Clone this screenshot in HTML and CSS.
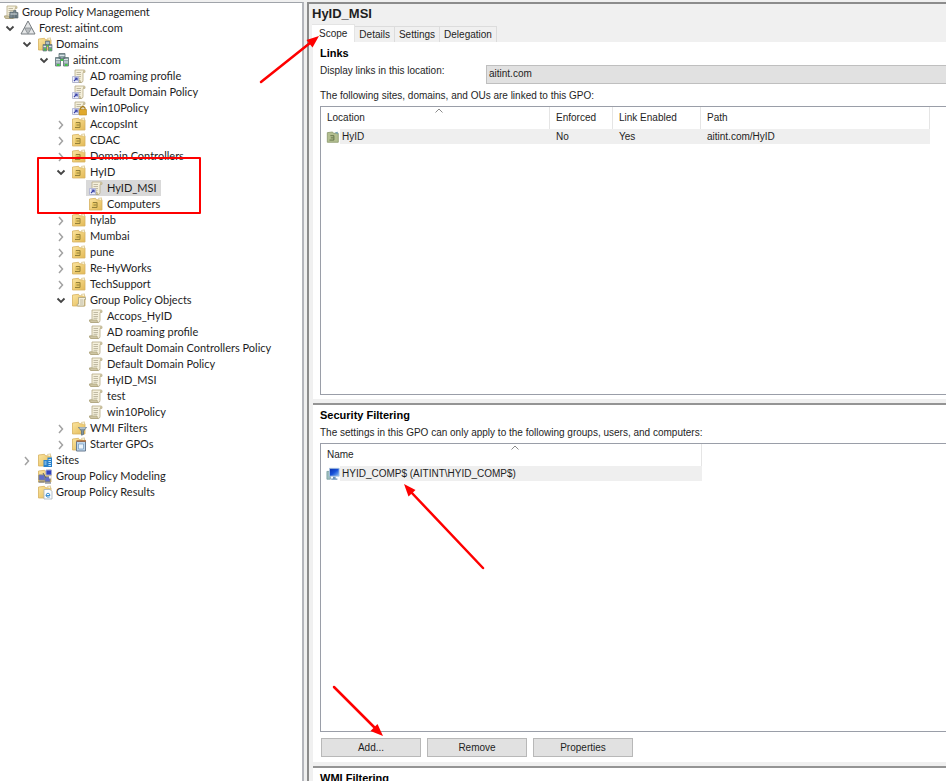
FILE: index.html
```
<!DOCTYPE html>
<html lang="en">
<head>
  <meta charset="UTF-8" />
  <title>Group Policy Management</title>
  <meta name="viewport" content="width=device-width, initial-scale=1.0" />
  <link rel="stylesheet" href="styles.css">
</head>
<body>

  <!-- Icon set -->
  <svg class="sprite" width="0" height="0" aria-hidden="true">
    <defs>
      <linearGradient id="gold" x1="0" y1="0" x2="1" y2="1">
        <stop offset="0" stop-color="#fbe5a0" />
        <stop offset="1" stop-color="#e3b955" />
      </linearGradient>
      <linearGradient id="screen" x1="0" y1="0" x2="1" y2="1">
        <stop offset="0" stop-color="#0a2fa8" />
        <stop offset="0.5" stop-color="#1650d8" />
        <stop offset="1" stop-color="#8ec4f5" />
      </linearGradient>
    </defs>

    <symbol id="open" viewBox="0 0 16 16">
      <path d="M4.500 6.500l3.500 3.500 3.500-3.500" fill="none" stroke="#444" stroke-width="1.800" />
    </symbol>
    <symbol id="closed" viewBox="0 0 16 16">
      <path d="M6 5l3.500 4-3.500 4" fill="none" stroke="#a2a2a2" stroke-width="1.500" />
    </symbol>
    <symbol id="sort" viewBox="0 0 8 5">
      <path d="M.5 4.500L4 1l3.500 3.500" fill="none" stroke="#8a8a8a" />
    </symbol>

    <symbol id="scroll" viewBox="0 0 16 16">
      <path d="M4 2h9.500q1 1 .3 2.500H12v8q0 2-2 2H3q-1.500-.5-1.500-2.500H4z" fill="#f5f0dc" stroke="#b5aa86" stroke-width=".8" />
      <path d="M1.500 12h7.500q0 2 1.300 2.500H3q-1.500-.5-1.500-2.500z" fill="#cfc6a4" stroke="#aba078" stroke-width=".7" />
      <path d="M12 4.500V2.500q1.500-1 2 .5v1.500z" fill="#c9bf9b" />
      <path d="M5.500 4.500h4.500M5.500 6.500h4.500M5.500 8.500h4.500M5.500 10.300h4" stroke="#b3ac94" stroke-width=".8" />
    </symbol>
    <symbol id="link" viewBox="0 0 16 16">
      <use href="#scroll" />
      <path d="M1.500 8.500h6v6h-6z" fill="#eef0fb" stroke="#a9aed2" stroke-width=".8" />
      <path d="M3 13l2.500-2.500M3.500 10h2.600v2.600" fill="none" stroke="#3a44a8" stroke-width="1.200" />
    </symbol>
    <symbol id="link-lock" viewBox="0 0 16 16">
      <use href="#link" />
      <path d="M9.700 10V8q2.200-3 4.300 0v2" fill="none" stroke="#a87e20" stroke-width="1.300" />
      <path d="M8.300 9.500h7.200v5.500H8.300z" fill="#e0a92c" stroke="#b98818" stroke-width=".6" />
    </symbol>
    <symbol id="folder" viewBox="0 0 16 16">
      <path d="M1.500 3l6-.7 1 1.500h5.500v10.200H1.500z" fill="url(#gold)" stroke="#d7b160" stroke-width=".8" />
      <path d="M10 2.500l3.500-.7v3" fill="#f9f3da" stroke="#d2bb7d" stroke-width=".6" />
    </symbol>
    <symbol id="ou" viewBox="0 0 16 16">
      <use href="#folder" />
      <path d="M4 6h6v6.500H4z" fill="#e8c765" />
      <path d="M5 6.500h4v5H4M5.500 9h3" fill="none" stroke="#94803a" />
    </symbol>
    <symbol id="ou-green" viewBox="0 0 16 16">
      <path d="M1.500 3l6-.7 1 1.500h5.500v10.200H1.500z" fill="#b3bf90" stroke="#8f9d70" />
      <path d="M10 2.500l3.500-.5v3" fill="#7aa6b5" />
      <path d="M5 6.500h4v5H4M5.500 9h3" fill="none" stroke="#5b6b43" />
    </symbol>
    <symbol id="server" viewBox="0 0 16 16">
      <path d="M5 1.500h6v5H5zM1.500 5.500h5V14h-5zM9.500 5.500h5V14h-5z" fill="#8fa3a8" stroke="#5e7176" stroke-width=".8" />
      <path d="M5.500 3.500h5M2 7.500h4M2 10h4M10 7.500h4M10 10h4" stroke="#dbe6e8" />
      <path d="M6.800 7h2.400v2H6.800zM3 12h2.500v2H3zM11 12h2.500v2H11z" fill="#42c445" />
    </symbol>
    <symbol id="console" viewBox="0 0 16 16">
      <use href="#scroll" />
      <path d="M7 8h3v6H6.500zM10.500 6.500H13V14h-2.500zM13 8.500h2V14h-2z" fill="#77878f" stroke="#53616a" stroke-width=".6" />
      <path d="M7.500 10h6.500" stroke="#d5dde0" />
    </symbol>
    <symbol id="forest" viewBox="0 0 16 16">
      <path d="M8 1l7 13H1z" fill="#e4e6e7" stroke="#777c80" />
      <path d="M4.500 8h7L8 14z" fill="#b7bbbe" stroke="#858b8f" stroke-width=".8" />
    </symbol>
    <symbol id="domains" viewBox="0 0 16 16">
      <use href="#folder" />
      <path d="M8.500 5h4v4h-4zM6 8.500h3.500V15H6zM11.500 8.500H15V15h-3.500z" fill="#8496a0" stroke="#566a73" stroke-width=".6" />
      <path d="M9 7h3M6.500 10.500h2.500M12 10.500h2.500" stroke="#dbe6e8" />
      <path d="M7 12.500h2v2H7zM12.500 12.500h2v2h-2zM9.500 9h2v1.500h-2z" fill="#42c445" />
    </symbol>
    <symbol id="gpos" viewBox="0 0 16 16">
      <use href="#folder" />
      <path d="M7.500 5.500h7v2h-1.200v6.500H6.500q-1-1 0-2h1z" fill="#f4efdb" stroke="#a9a17f" stroke-width=".8" />
      <path d="M9 8h3M9 10h3M9 12h3" stroke="#b3ac94" stroke-width=".8" />
    </symbol>
    <symbol id="filter" viewBox="0 0 16 16">
      <use href="#folder" />
      <path d="M7.500 7.500h8l-3 3.500v3.500l-2 .7V11z" fill="#8296a5" stroke="#526878" stroke-width=".7" />
      <path d="M8.500 8h6" stroke="#dce8f0" />
    </symbol>
    <symbol id="starter" viewBox="0 0 16 16">
      <use href="#folder" />
      <path d="M5.500 5.500h9v9.500h-9z" fill="#bed7ee" stroke="#697b90" />
      <path d="M5.500 5h9.500" stroke="#a8683d" stroke-width="1.500" />
      <path d="M7.500 8h5v5h-5z" fill="#eaf4fc" stroke="#7295ba" stroke-width=".7" />
    </symbol>
    <symbol id="sites" viewBox="0 0 16 16">
      <use href="#folder" />
      <path d="M6.500 8h4V5.500H15V15H6.500z" fill="#2780cb" />
      <path d="M7.500 10h2M7.500 12h2M11.500 7.500h2.500M11.500 9.500h2.500M11.500 11.500h2.500M11.500 13.500h2.500" stroke="#c4e3fa" />
    </symbol>
    <symbol id="modeling" viewBox="0 0 16 16">
      <use href="#folder" />
      <path d="M9 2h5.500v5H9z" fill="#3342bd" stroke="#a0a7d0" />
      <path d="M2 7h5.500v5H2zM8 9h5v4.500H8z" fill="#606cc9" stroke="#777f95" />
      <path d="M1.500 14h6M8 15h6M6 5l3 5" stroke="#596377" />
      <path d="M12 8h2.500v2.500H12z" fill="#e9eef9" />
    </symbol>
    <symbol id="results" viewBox="0 0 16 16">
      <use href="#folder" />
      <path d="M7 5.500h6l2 2V15H7z" fill="#fafcfe" stroke="#a5b1bd" stroke-width=".8" />
      <path d="M9 11.500h4q-.3-2.300-2-2.300T9 11.500q.2 2.300 3.700 1.500" fill="none" stroke="#3d8fd0" />
    </symbol>
    <symbol id="computer" viewBox="0 0 16 16">
      <path d="M1 5h4v9H1z" fill="#9ebfbe" stroke="#628c92" stroke-width=".7" />
      <path d="M4 1.500h11v9H4z" fill="url(#screen)" stroke="#a9c4df" />
      <path d="M8 11h3v2h2v1.500H6V13h2z" fill="#6c93b8" />
    </symbol>
  </svg>

  <div class="console">
    <nav class="tree-pane" aria-label="Console tree">
      <ul class="tree">
        <li>
          <div class="node root"><span class="item"><svg class="icon"><use href="#console" /></svg>Group Policy Management</span></div>
          <ul>
            <li>
              <div class="node"><button class="twisty" aria-label="Collapse"><svg><use href="#open" /></svg></button><span class="item"><svg class="icon"><use href="#forest" /></svg>Forest: aitint.com</span></div>
              <ul>
                <li>
                  <div class="node"><button class="twisty" aria-label="Collapse"><svg><use href="#open" /></svg></button><span class="item"><svg class="icon"><use href="#domains" /></svg>Domains</span></div>
                  <ul>
                    <li>
                      <div class="node"><button class="twisty" aria-label="Collapse"><svg><use href="#open" /></svg></button><span class="item"><svg class="icon"><use href="#server" /></svg>aitint.com</span></div>
                      <ul>
                        <li><div class="node leaf"><span class="item"><svg class="icon"><use href="#link" /></svg>AD roaming profile</span></div></li>
                        <li><div class="node leaf"><span class="item"><svg class="icon"><use href="#link" /></svg>Default Domain Policy</span></div></li>
                        <li><div class="node leaf"><span class="item"><svg class="icon"><use href="#link-lock" /></svg>win10Policy</span></div></li>
                        <li><div class="node"><button class="twisty" aria-label="Expand"><svg><use href="#closed" /></svg></button><span class="item"><svg class="icon"><use href="#ou" /></svg>AccopsInt</span></div></li>
                        <li><div class="node"><button class="twisty" aria-label="Expand"><svg><use href="#closed" /></svg></button><span class="item"><svg class="icon"><use href="#ou" /></svg>CDAC</span></div></li>
                        <li><div class="node"><button class="twisty" aria-label="Expand"><svg><use href="#closed" /></svg></button><span class="item"><svg class="icon"><use href="#ou" /></svg>Domain Controllers</span></div></li>
                        <li>
                          <div class="node"><button class="twisty" aria-label="Collapse"><svg><use href="#open" /></svg></button><span class="item"><svg class="icon"><use href="#ou" /></svg>HyID</span></div>
                          <ul>
                            <li><div class="node leaf"><span class="item selected"><svg class="icon"><use href="#link" /></svg>HyID_MSI</span></div></li>
                            <li><div class="node leaf"><span class="item"><svg class="icon"><use href="#ou" /></svg>Computers</span></div></li>
                          </ul>
                        </li>
                        <li><div class="node"><button class="twisty" aria-label="Expand"><svg><use href="#closed" /></svg></button><span class="item"><svg class="icon"><use href="#ou" /></svg>hylab</span></div></li>
                        <li><div class="node"><button class="twisty" aria-label="Expand"><svg><use href="#closed" /></svg></button><span class="item"><svg class="icon"><use href="#ou" /></svg>Mumbai</span></div></li>
                        <li><div class="node"><button class="twisty" aria-label="Expand"><svg><use href="#closed" /></svg></button><span class="item"><svg class="icon"><use href="#ou" /></svg>pune</span></div></li>
                        <li><div class="node"><button class="twisty" aria-label="Expand"><svg><use href="#closed" /></svg></button><span class="item"><svg class="icon"><use href="#ou" /></svg>Re-HyWorks</span></div></li>
                        <li><div class="node"><button class="twisty" aria-label="Expand"><svg><use href="#closed" /></svg></button><span class="item"><svg class="icon"><use href="#ou" /></svg>TechSupport</span></div></li>
                        <li>
                          <div class="node"><button class="twisty" aria-label="Collapse"><svg><use href="#open" /></svg></button><span class="item"><svg class="icon"><use href="#gpos" /></svg>Group Policy Objects</span></div>
                          <ul>
                            <li><div class="node leaf"><span class="item"><svg class="icon"><use href="#scroll" /></svg>Accops_HyID</span></div></li>
                            <li><div class="node leaf"><span class="item"><svg class="icon"><use href="#scroll" /></svg>AD roaming profile</span></div></li>
                            <li><div class="node leaf"><span class="item"><svg class="icon"><use href="#scroll" /></svg>Default Domain Controllers Policy</span></div></li>
                            <li><div class="node leaf"><span class="item"><svg class="icon"><use href="#scroll" /></svg>Default Domain Policy</span></div></li>
                            <li><div class="node leaf"><span class="item"><svg class="icon"><use href="#scroll" /></svg>HyID_MSI</span></div></li>
                            <li><div class="node leaf"><span class="item"><svg class="icon"><use href="#scroll" /></svg>test</span></div></li>
                            <li><div class="node leaf"><span class="item"><svg class="icon"><use href="#scroll" /></svg>win10Policy</span></div></li>
                          </ul>
                        </li>
                        <li><div class="node"><button class="twisty" aria-label="Expand"><svg><use href="#closed" /></svg></button><span class="item"><svg class="icon"><use href="#filter" /></svg>WMI Filters</span></div></li>
                        <li><div class="node"><button class="twisty" aria-label="Expand"><svg><use href="#closed" /></svg></button><span class="item"><svg class="icon"><use href="#starter" /></svg>Starter GPOs</span></div></li>
                      </ul>
                    </li>
                  </ul>
                </li>
                <li><div class="node"><button class="twisty" aria-label="Expand"><svg><use href="#closed" /></svg></button><span class="item"><svg class="icon"><use href="#sites" /></svg>Sites</span></div></li>
                <li><div class="node leaf"><span class="item"><svg class="icon"><use href="#modeling" /></svg>Group Policy Modeling</span></div></li>
                <li><div class="node leaf"><span class="item"><svg class="icon"><use href="#results" /></svg>Group Policy Results</span></div></li>
              </ul>
            </li>
          </ul>
        </li>
      </ul>
    </nav>

    <main class="details">
      <h1>HyID_MSI</h1>
      <div class="tabs">
        <button class="tab active">Scope</button>
        <button class="tab">Details</button>
        <button class="tab">Settings</button>
        <button class="tab">Delegation</button>
      </div>

      <div class="page">
        <section>
          <h2>Links</h2>
          <div class="location">
            <label for="location">Display links in this location:</label>
            <select id="location"><option>aitint.com</option></select>
          </div>
          <p>The following sites, domains, and OUs are linked to this GPO:</p>
          <div class="list">
            <table class="links">
              <thead>
                <tr>
                  <th class="wide">Location<svg class="sort"><use href="#sort" /></svg></th>
                  <th class="narrow">Enforced</th>
                  <th class="medium">Link Enabled</th>
                  <th class="wide">Path</th>
                </tr>
              </thead>
              <tbody>
                <tr>
                  <td><span class="cell"><svg class="icon"><use href="#ou-green" /></svg>HyID</span></td>
                  <td>No</td>
                  <td>Yes</td>
                  <td>aitint.com/HyID</td>
                </tr>
              </tbody>
            </table>
          </div>
        </section>

        <section>
          <h2>Security Filtering</h2>
          <p>The settings in this GPO can only apply to the following groups, users, and computers:</p>
          <div class="list">
            <table class="names">
              <thead>
                <tr><th>Name<svg class="sort"><use href="#sort" /></svg></th></tr>
              </thead>
              <tbody>
                <tr><td><span class="cell"><svg class="icon"><use href="#computer" /></svg>HYID_COMP$ (AITINT\HYID_COMP$)</span></td></tr>
              </tbody>
            </table>
          </div>
          <div class="actions">
            <button>Add...</button>
            <button>Remove</button>
            <button>Properties</button>
          </div>
        </section>

        <section>
          <h2>WMI Filtering</h2>
        </section>
      </div>
    </main>

    <!-- Callouts drawn over the window -->
    <div class="callout-box"></div>
    <svg class="callouts" aria-hidden="true">
      <g stroke="#fe0000" stroke-width="2.500" stroke-linecap="round">
        <path d="M261 82L310 43" />
        <path d="M483 568L411 492" />
        <path d="M334 687L376 729" />
      </g>
      <g fill="#fe0000">
        <path d="M319 36L312.500 47.500L306.500 40z" />
        <path d="M404 484L415.500 490L408.500 496.500z" />
        <path d="M383 736L370.500 731L377.500 724z" />
      </g>
    </svg>
  </div>

</body>
</html>
```
FILE: styles.css
```
* {
  box-sizing: border-box;
}

body {
  margin: 0;
  background: #f0f0f0;
  color: #1e1e1e;
  font-family: "Liberation Sans", Arial, sans-serif;
  font-size: 10px;
  line-height: 14px;
}

button, select {
  font: inherit;
  color: inherit;
}

h1, h2, p, ul {
  margin: 0;
  padding: 0;
}

.sprite {
  position: absolute;
}

.console {
  position: relative;
  display: grid;
  grid-template-columns: 304px 1fr;
  gap: 3px;
  height: 100vh;
  padding-top: 2px;
  overflow: hidden;
}

/* Console tree */
.tree-pane {
  background: #fff;
  border-top: 1px solid #a0a4aa;
  border-right: 2px solid #b4b6bc;
  padding: 1px 0 0 2px;
  font-family: Lato, "Open Sans", sans-serif;
  font-size: 11px;
  line-height: 16px;
  white-space: nowrap;
  overflow: hidden;
}

.tree ul ul {
  padding-left: 17px;
}

.tree li {
  list-style: none;
}

.node {
  display: flex;
  height: 16px;
}

.node.leaf {
  padding-left: 16px;
}

.item {
  display: flex;
  gap: 3px;
  padding: 0 4px 0 2px;
}

.root .item {
  padding-left: 1px;
}

.item.selected {
  background: #d9d9d9;
}

.icon {
  flex: none;
  width: 16px;
  height: 16px;
}

.twisty {
  width: 16px;
  height: 16px;
  padding: 0;
  border: 0;
  background: none;
}

.twisty svg {
  display: block;
  width: 16px;
  height: 16px;
}

/* Details pane */
.details {
  display: flex;
  flex-direction: column;
  min-width: 0;
  border-top: 2px solid #8c8c8c;
  border-left: 2px solid #8c8c8c;
  padding-left: 3px;
  overflow: hidden;
}

h1 {
  height: 20px;
  font-size: 13px;
  line-height: 20px;
}

.tabs {
  display: flex;
  align-items: flex-end;
  height: 18px;
}

.tab {
  height: 16px;
  padding: 0 4px;
  border: 1px solid #dcdcdc;
  border-left: 0;
  border-bottom: 0;
  background: #f0f0f0;
}

.tab.active {
  height: 18px;
  padding: 0 7px;
  border-color: #e4e4e4;
  background: #fff;
}

.page {
  flex: 1;
  margin-left: 1px;
  background: #fff;
}

section {
  padding: 4px 0 4px 7px;
}

section + section {
  border-top: 2px solid #949494;
  box-shadow: 0 -4px #f0f0f0;
  margin-top: 4px;
  padding-top: 3px;
}

h2 {
  color: #000;
  font-size: 11px;
  line-height: 14px;
}

.location {
  display: flex;
  align-items: center;
  margin: 4px 0 5px;
}

.location label {
  flex: none;
  width: 166px;
  padding-bottom: 6px;
}

.location select {
  flex: 1;
  height: 19px;
  padding: 0 2px;
  border: 1px solid #bfbfbf;
  border-right: 0;
  border-radius: 0;
  background: #e1e1e1;
  appearance: none;
}

p {
  margin: 4px 0 3px;
}

.list {
  min-height: 289px;
  border: 1px solid #9a9ea8;
  border-right: 0;
}

table {
  table-layout: fixed;
  border-collapse: separate;
  border-spacing: 0;
}

.links {
  width: 609px;
}

.names {
  width: 381px;
}

th, td {
  padding: 0 6px;
  text-align: left;
}

th {
  position: relative;
  height: 22px;
  border-right: 1px solid #e5e5e5;
  font-weight: normal;
}

td {
  height: 15px;
  padding-top: 1px;
  line-height: 14px;
  background: #efefef;
}

td:first-child {
  background: linear-gradient(to right, #fff 19px, #efefef 19px);
}

.wide {
  width: 229px;
}

.narrow {
  width: 63px;
}

.medium {
  width: 88px;
}

.sort {
  position: absolute;
  top: 1px;
  left: 50%;
  width: 8px;
  height: 5px;
}

.cell {
  display: flex;
  gap: 2px;
  margin-left: -1px;
}

.cell .icon {
  width: 14px;
  height: 14px;
}

.actions {
  display: flex;
  gap: 6px;
  padding: 6px 0 1px 1px;
}

.actions button {
  width: 100px;
  height: 19px;
  padding: 0;
  border: 1px solid #b8b8b8;
  background: #e1e1e1;
}

/* Callouts */
.callout-box {
  position: absolute;
  top: 157px;
  left: 37px;
  width: 164px;
  height: 57px;
  border: 2px solid #fe0000;
  border-radius: 1px;
}

.callouts {
  position: absolute;
  top: 0;
  left: 0;
  width: 100%;
  height: 100%;
  pointer-events: none;
}
```
